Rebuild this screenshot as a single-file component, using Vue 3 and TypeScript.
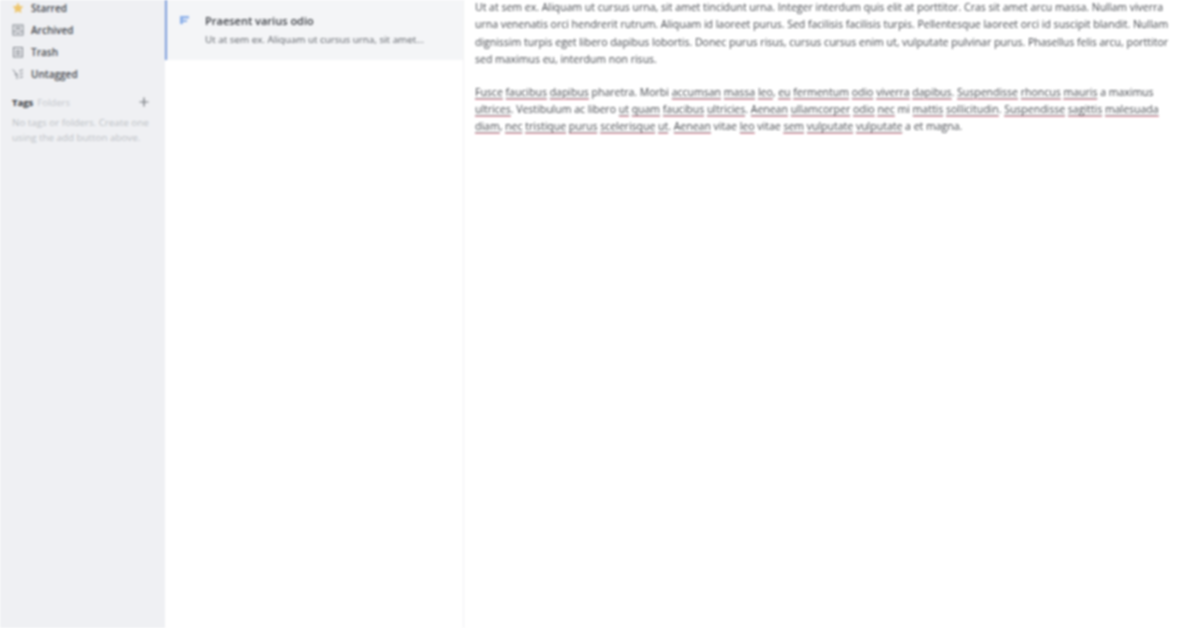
<script setup lang="ts">
type Seg = { t: string; u?: boolean }
const mk = (s: string): Seg[] =>
  s.split(/(\[[^\]]*\])/).filter(Boolean).map((p) =>
    p.startsWith('[') ? { t: p.slice(1, -1), u: true } : { t: p }
  )
const para1 =
  'Ut at sem ex. Aliquam ut cursus urna, sit amet tincidunt urna. Integer interdum quis elit at porttitor. Cras sit amet arcu massa. Nullam viverra urna venenatis orci hendrerit rutrum. Aliquam id laoreet purus. Sed facilisis facilisis turpis. Pellentesque laoreet orci id suscipit blandit. Nullam dignissim turpis eget libero dapibus lobortis. Donec purus risus, cursus cursus enim ut, vulputate pulvinar purus. Phasellus felis arcu, porttitor sed maximus eu, interdum non risus.'
const para2 = mk(
  '[Fusce] [faucibus] [dapibus] pharetra. Morbi [accumsan] [massa] [leo], [eu] [fermentum] [odio] [viverra] [dapibus]. [Suspendisse] [rhoncus] [mauris] a maximus [ultrices]. Vestibulum ac libero [ut] [quam] [faucibus] [ultricies]. [Aenean] [ullamcorper] [odio] [nec] mi [mattis] [sollicitudin]. [Suspendisse] [sagittis] [malesuada] [diam], [nec] [tristique] [purus] [scelerisque] [ut]. [Aenean] vitae [leo] vitae [sem] [vulputate] [vulputate] a et magna.'
)
const navs = ['Starred', 'Archived', 'Trash', 'Untagged']
</script>

<template>
  <div class="app">
    <aside class="side">
      <ul class="nav">
        <li v-for="(n, i) in navs" :key="n" class="nav-row">
          <svg class="ic" viewBox="0 0 12 12">
            <path v-if="i === 0" d="M6 .6l1.7 3.5 3.8.5-2.8 2.6.7 3.8L6 9.2l-3.4 1.8.7-3.8L.5 4.6l3.8-.5z" fill="#eec66e" />
            <g v-else-if="i === 1" fill="none" stroke="#7d8189" stroke-width="1">
              <rect x="1" y="1" width="10" height="10" />
              <path d="M1 7.5h3l.8 1.3h2.4L8 7.5h3M3.2 3.3h5.6M3.2 5.3h5.6" />
            </g>
            <g v-else-if="i === 2" fill="none" stroke="#7d8189" stroke-width="1">
              <rect x="1.5" y="1.5" width="9" height="9.5" />
              <path d="M3.5 4.5h5M3.5 6.5h5M3.5 8.5h5" />
            </g>
            <g v-else fill="none" stroke="#7d8189" stroke-width="1">
              <path d="M.8 1.5l4.2 5v4.5M5.3 6.5H2.6M11 1.6 7.2 3.2M11 5 7.6 6.4M11 8.6 7.6 9.6" />
            </g>
          </svg>
          <span>{{ n }}</span>
        </li>
      </ul>
      <div class="tags-head">
        <b>Tags</b><span class="folders">Folders</span>
        <svg class="plus" viewBox="0 0 10 10"><path d="M5 .5v9M.5 5h9" stroke="#70747b" stroke-width="1.2" /></svg>
      </div>
      <p class="empty">No tags or folders. Create one using the add button above.</p>
    </aside>

    <section class="list">
      <div class="card">
        <svg class="note-ic" viewBox="0 0 10 8"><path d="M0 0h9v2.4H3V4h4v2H3v2H0z" fill="#8fb2ea" /></svg>
        <div class="card-body">
          <div class="title">Praesent varius odio</div>
          <div class="preview">Ut at sem ex. Aliquam ut cursus urna, sit amet...</div>
        </div>
      </div>
    </section>

    <main class="editor">
      <p>{{ para1 }}</p>
      <p>
        <template v-for="(s, i) in para2" :key="i"><span v-if="s.u" class="sp">{{ s.t }}</span><template v-else>{{ s.t }}</template></template>
      </p>
    </main>
  </div>
</template>

<style>
html, body { margin: 0; overflow: hidden; background: #fff; }
</style>

<style scoped>
.app {
  display: flex;
  height: 628px;
  width: 1196px;
  overflow: hidden;
  font-family: "Open Sans", "Noto Sans", sans-serif;
  color: #35383e;
  filter: blur(0.8px);
}
.side {
  width: 165px;
  flex: none;
  background: #eff0f3;
  box-sizing: border-box;
  padding: 0 12px;
  font-size: 10px;
}
.nav { list-style: none; margin: -3px 0 0; padding: 0; }
.nav-row { display: flex; align-items: center; gap: 7px; height: 22px; font-weight: 600; color: #45484e; }
.ic { width: 12px; height: 12px; flex: none; }
.tags-head { display: flex; align-items: center; height: 16px; margin-top: 9px; font-size: 9.5px; }
.tags-head b { font-weight: 700; color: #33363b; }
.folders { margin-left: 4px; color: #c3c6cb; }
.plus { width: 10px; height: 10px; margin-left: auto; margin-right: 4px; }
.empty { margin: 5px -4px 0 0; font-size: 9.8px; line-height: 15px; color: #bcc0c5; }
.list { width: 299px; flex: none; box-sizing: border-box; border-right: 1px solid #f0f1f3; background: #fff; }
.card {
  display: flex;
  height: 60px;
  box-sizing: border-box;
  background: #f4f5f7;
  border-left: 2px solid #7c9ddb;
  padding: 16px 0 0 13px;
  gap: 15px;
}
.note-ic { width: 10px; height: 8px; flex: none; }
.title { font-size: 11px; font-weight: 600; line-height: 12px; color: #3c3f45; margin-top: -1px; }
.preview { font-size: 9.85px; line-height: 12px; margin-top: 6px; color: #5c6067; white-space: nowrap; }
.editor {
  flex: 1;
  padding: 0 22px 0 11px;
  font-size: 10.5px;
  line-height: 17.4px;
  color: #45484e;
}
.editor p { margin: -1px 0 15px; }
.editor p + p { margin-top: 0; }
.sp {
  text-decoration: underline;
  text-decoration-color: #8e9197;
  text-underline-offset: 1.5px;
  border-bottom: 1px solid #f8a2b0;
}
</style>
